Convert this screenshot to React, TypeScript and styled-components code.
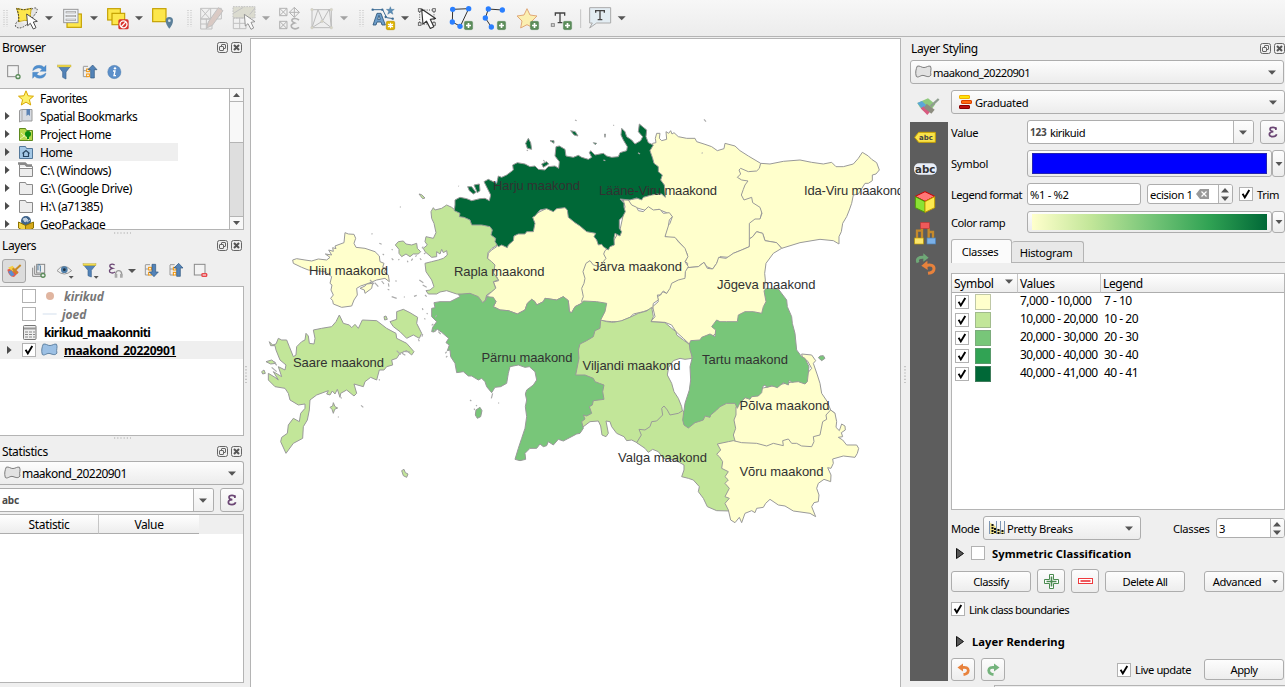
import React from "react";
import styled, { createGlobalStyle, css } from "styled-components";

const Global = createGlobalStyle`
  *, *::before, *::after { box-sizing: border-box; }
  body { margin: 0; background: #efefef; overflow: hidden; }
  svg { display: block; flex: none; }
`;

const ui = css`font-family: "Noto Sans", "Open Sans", sans-serif;`;

const Window = styled.div`
  ${ui}
  width: 1285px; height: 687px; display: flex; flex-direction: column;
  background: #efefef; color: #000; font-size: 12px; letter-spacing: -0.4px; white-space: nowrap; overflow: hidden;
`;
const Toolbar = styled.div`
  height: 37px; flex: none; display: flex;
  background: linear-gradient(#f7f7f7, #ececec); border-bottom: 1px solid #b4b4b4;
`;
const Body = styled.div`flex: 1; min-height: 0; display: flex;`;
const LeftDock = styled.div`width: 244px; display: flex; flex-direction: column; flex: none;`;
const Splitter = styled.div<{ $w: number }>`
  width: ${p => p.$w}px; flex: none; display: flex; align-items: center; justify-content: center; padding: 25px 2px 0 0;
`;
const MapFrame = styled.div`
  width: 651px; margin-top: 1px; flex: none; background: #fff; border: 1px solid #b4b4b4; border-bottom: 0; overflow: hidden;
`;
const RightDock = styled.div`width: 375px; flex: none; display: flex; flex-direction: column; font-size: 11.2px; letter-spacing: -0.5px;`;

const TitleBar = styled.div<{ $h: number; $pl: number; $pr: number; $down?: boolean }>`
  height: ${p => p.$h}px; flex: none; display: flex; align-items: center; gap: 1px;
  padding: ${p => (p.$down ? 1 : 0)}px ${p => p.$pr}px ${p => (p.$down ? 0 : 1)}px ${p => p.$pl}px; font-size: 12px; letter-spacing: -0.4px;
  span { flex: 1; }
`;
const IconRow = styled.div<{ $h: number; $pb: number }>`height: ${p => p.$h}px; padding-bottom: ${p => p.$pb}px; flex: none; display: flex; align-items: center;`;
const Tree = styled.div<{ $h: number }>`
  height: ${p => p.$h}px; flex: none; display: flex; background: #fff; overflow: hidden;
  border: 1px solid #b4b4b4; border-left: 0;
`;
const TreeRows = styled.div`flex: 1; overflow: hidden;`;
const TreeRow = styled.div<{ $sel?: number }>`
  height: 18px; display: flex; align-items: center;
  background: linear-gradient(#efefef, #efefef) no-repeat 0 0 / ${p => p.$sel || 0}px 100%;
`;
const TreeText = styled.span<{ $ml?: number; $b?: boolean; $i?: boolean; $u?: boolean }>`
  margin-left: ${p => p.$ml || 0}px; font-weight: ${p => (p.$b ? 700 : 400)};
  font-style: ${p => (p.$i ? "italic" : "normal")}; color: ${p => (p.$i ? "#777" : "#000")};
  text-decoration: ${p => (p.$u ? "underline" : "none")}; letter-spacing: ${p => (p.$i ? -0.05 : p.$u ? -0.26 : p.$b ? -0.58 : -0.45)}px;
`;
const ExpandSlot = styled.div`width: 18px; flex: none; padding-left: 5px;`;
const ScrollBar = styled.div`
  width: 14px; flex: none; display: flex; flex-direction: column; background: #dedede; border-left: 1px solid #b4b4b4;
`;
const ScrollPart = styled.div<{ $h: number; $push?: boolean }>`
  height: ${p => p.$h}px; display: flex; align-items: center; justify-content: center; background: #f8f8f8;
  border: solid #b4b4b4; border-width: ${p => (p.$push ? "1px 0 0" : "0 0 1px")}; margin-top: ${p => (p.$push ? "auto" : 0)};
`;
const DotsRow = styled.div<{ $h: number }>`height: ${p => p.$h}px; flex: none; display: flex; align-items: center; justify-content: center;`;

const Check = styled.div<{ $ml?: number }>`
  width: 14px; height: 14px; flex: none; margin-left: ${p => p.$ml || 0}px;
  background: #fff; border: 1px solid #b2b2b2; display: flex; align-items: center; justify-content: center;
`;
const Row = styled.div<{ $h: number; $mt?: number }>`
  height: ${p => p.$h}px; margin-top: ${p => p.$mt || 0}px; flex: none; display: flex; align-items: center;
`;
const Combo = styled.div<{ $w: number; $h?: number; $pr?: number; $flatLeft?: boolean }>`
  width: ${p => p.$w}px; height: ${p => p.$h || 24}px; flex: none; display: flex; align-items: center; padding: 0 ${p => p.$pr ?? 7}px 0 4px;
  background: linear-gradient(#fdfdfd, #ececec); border: 1px solid #adadad; border-radius: 3px;
  ${p => p.$flatLeft && css`border-left: 0; border-radius: 0 3px 3px 0;`}
  > svg:last-child { margin-left: auto; }
`;
const Field = styled.div<{ $w: number; $h: number; $flatLeft?: boolean; $ml?: number }>`
  width: ${p => p.$w}px; height: ${p => p.$h}px; flex: none; display: flex; align-items: stretch; margin-left: ${p => p.$ml || 0}px;
  background: #fff; border: 1px solid #adadad; border-radius: 3px; overflow: hidden;
  ${p => p.$flatLeft && css`border-left: 0; border-radius: 0 3px 3px 0;`}
`;
const FieldText = styled.div<{ $ls?: number }>`flex: 1; display: flex; align-items: center; padding-left: 2px; overflow: hidden; letter-spacing: ${p => p.$ls ?? -0.5}px;`;
const Drop = styled.div<{ $w: number }>`
  width: ${p => p.$w}px; flex: none; border-left: 1px solid #b4b4b4; background: linear-gradient(#fdfdfd, #f0f0f0);
  display: flex; align-items: center; justify-content: center; padding-right: 2px;
`;
const Button = styled.div<{ $w: number; $h: number; $ml?: number }>`
  width: ${p => p.$w}px; height: ${p => p.$h}px; margin-left: ${p => p.$ml || 0}px; flex: none;
  display: flex; align-items: center; justify-content: center;
  background: linear-gradient(#fdfdfd, #ededed); border: 1px solid #adadad; border-radius: 3px;
`;
const ToolToggle = styled.div`
  width: 24px; height: 24px; margin-left: 2px; border: 1px solid #a6a6a6; border-radius: 3px; background: #dcdcdc;
`;
const TypeMark = styled.span<{ $w: number }>`width: ${p => p.$w}px; flex: none; font-weight: 700; font-size: 10px; color: #4a4a4a; letter-spacing: -0.2px; margin-top: -1px;`;

const HeadCell = styled.div<{ $w?: number; $center?: boolean; $line?: boolean; $pl?: number }>`
  ${p => (p.$w ? `width: ${p.$w}px; flex: none;` : "flex: 1;")}
  display: flex; align-items: center; justify-content: ${p => (p.$center ? "center" : "flex-start")}; padding-left: ${p => p.$pl || 0}px;
  background: linear-gradient(#fff, #ededed); border-bottom: 1px solid #adadad; border-right: ${p => (p.$line ? 1 : 0)}px solid #c6c6c6;
  font-size: 12px; letter-spacing: -0.35px;
  svg { margin-left: auto; margin-right: 4px; margin-top: -4px; }
`;
const StatTable = styled.div`height: 169px; margin-top: 2px; flex: none; border: 1px solid #b4b4b4; border-left: 0; background: #fff;`;
const StatHead = styled.div`height: 19px; display: flex; background: #efefef;`;

const StyleBody = styled.div`display: flex; flex: none; height: 597px;`;
const SideBar = styled.div`width: 38px; flex: none; padding-top: 5px; display: flex; flex-direction: column;`;
const SideDark = styled.div`flex: 1; background: #5d5d5d; margin-top: 1px;`;
const Form = styled.div`width: 334px; margin-left: 3px; flex: none; display: flex; flex-direction: column;`;
const Label = styled.div<{ $w?: number; $ml?: number; $b?: boolean; $ls?: number }>`
  ${p => p.$w && `width: ${p.$w}px;`} flex: none; margin-left: ${p => p.$ml || 0}px;
  ${p => p.$ls !== undefined && `letter-spacing: ${p.$ls}px;`}
  ${p => p.$b && "font-weight: 700; letter-spacing: 0.08px;"}
`;
const Tabs = styled.div`height: 24px; margin-top: 6px; display: flex; align-items: flex-end; flex: none; border-bottom: 1px solid #b4b4b4; letter-spacing: -0.3px;`;
const Tab = styled.div<{ $w: number; $on?: boolean }>`
  width: ${p => p.$w}px; height: ${p => (p.$on ? 24 : 21)}px; margin-bottom: ${p => (p.$on ? -1 : 0)}px; flex: none;
  display: flex; align-items: center; justify-content: center; padding: 0 3px 0 0;
  background: ${p => (p.$on ? "#fbfbfb" : "#e8e8e8")}; border: 1px solid #b4b4b4; border-bottom: 0; border-left-width: ${p => (p.$on ? 1 : 0)}px;
  border-radius: 3px 3px 0 0;
`;
const ClassTable = styled.div`height: 237px; margin-top: 10px; flex: none; background: #fff; border: 1px solid #b4b4b4;`;
const ClassRow = styled.div`height: 18px; display: flex; align-items: center; font-size: 12px; letter-spacing: -0.5px;`;
const ClassSwatch = styled.div<{ $c: string }>`width: 16px; height: 16px; margin: 0 29px 0 6px; background: ${p => p.$c}; border: 1px solid #7f8f7f80;`;
const ClassText = styled.span<{ $w: number }>`width: ${p => p.$w}px; margin-top: -3px;`;
const HeadRow = styled.div`display: flex; flex: 1; align-self: stretch;`;
const FillBar = styled.div`flex: 1; align-self: stretch; margin: 2px 0;`;
const SymbolFill = styled(FillBar)`background: #0000ff; border: 1px solid #2323b0;`;
const RampFill = styled(FillBar)`background: linear-gradient(90deg, #ffffcc, #c2e699 25%, #78c679 50%, #31a354 75%, #006837);`;
const BottomTabs = styled.div`height: 2px; margin-top: auto; display: flex; div { border-top: 1px solid #b4b4b4; } div:first-child { width: 84px; border-color: transparent; } div:last-child { flex: 1; border-left: 1px solid #b4b4b4; }`;

/* Icons are drawn on a grid of three units to a pixel. */
const Ico = ({ b, children, o = 1 }: { b: [number, number, number, number]; children?: React.ReactNode; o?: number }) => (
  <svg width={b[2] / 3} height={b[3] / 3} viewBox={b.join(" ")} opacity={o}>{children}</svg>
);
const Arrow = ({ w = 8 }: { w?: number }) => (
  <svg width={w} height={5} viewBox="0 0 8 5"><path d="M0 0.4h8L4 4.8z" fill="#555" /></svg>
);
const DropTiny = () => <svg width={7} height={4} viewBox="0 0 7 4" overflow="visible"><path d="M-1.500 0h7L2 4z" fill="#555" /></svg>;
const UpDown = () => (
  <svg width={8} height={13} viewBox="0 0 8 13"><path d="M4 0l4 4.4H0zM4 13l4-4.4H0z" fill="#555" /></svg>
);
const Expander = () => <svg width={5} height={8} viewBox="0 0 5 8"><path d="M0 0l4.600 4L0 8z" fill="#4c4c4c" /></svg>;
const BigExpander = () => <svg width={8} height={11} viewBox="0 0 8 11"><path d="M.5.5l7 5-7 5z" fill="#555" stroke="#111" /></svg>;
const Tick = () => <svg width={10} height={10} viewBox="0 0 10 10"><path d="M1.600 4.800l2.200 3.600L8.300.9" fill="none" stroke="#000" strokeWidth="1.900" /></svg>;
const EpsilonIcon = () => (
  <svg width={10} height={12} viewBox="0 0 30 36"><path d="M24 10Q23 4 15 4 6 4 6 10q0 6 10 7Q4 18 4 25q0 7 11 7 9 0 11-7" fill="none" stroke="#6b4674" strokeWidth="5" /><path d="M21 4h5v8h-5z" fill="#6b4674" /></svg>
);
const DockButtons = () => (
  <svg width={25} height={11} viewBox="0 0 25 11" fill="none" stroke="#666">
    <rect x=".5" y=".5" width="10" height="10" rx="2" /><rect x="4.500" y="2.500" width="4" height="4" rx=".5" /><rect x="2.500" y="4.500" width="4" height="4" rx=".5" fill="#efefef" />
    <rect x="14.500" y=".5" width="10" height="10" rx="2" /><path d="M17 3l5 5M22 3l-5 5" stroke="#555" strokeWidth="2" />
  </svg>
);
const TArrow = ({ b, cx, o }: { b: [number, number, number, number]; cx: number; o?: number }) => (
  <Ico b={b} o={o}><path d={`M${cx - 12} 49h24l-12 12z`} fill="#555" /></Ico>
);
const Handle = ({ b, x }: { b: [number, number, number, number]; x: number }) => (
  <Ico b={b}>{[0, 9].map(dx => <path key={dx} d={`M${x + dx} 30V80`} stroke="#bbb" strokeWidth="3" strokeDasharray="3 4" />)}</Ico>
);
const Cursor = ({ x, y, s = 1 }: { x: number; y: number; s?: number }) => (
  <path transform={`translate(${x} ${y}) scale(${s})`} d="M0 0l3 35 8-7 9 17 8-4-8-17 12-2z" fill="#fff" stroke="#333" strokeWidth="2.600" strokeLinejoin="round" />
);
const Plus = ({ x, y }: { x: number; y: number }) => (
  <g><rect x={x} y={y} width="25" height="25" rx="4" fill="#5b8c5a" stroke="#477a4b" /><path d={`M${x + 12.5} ${y + 5}v15M${x + 5} ${y + 12.5}h15`} stroke="#fff" strokeWidth="5" /></g>
);
const Yellow = ({ x, y, w, h }: { x: number; y: number; w: number; h: number }) => <rect x={x} y={y} width={w} height={h} fill="#fde74c" stroke="#c4a000" strokeWidth="3.500" />;
const Nodes = ({ p }: { p: number[][] }) => <>{p.map(([x, y], i) => <circle key={i} cx={x} cy={y} r="8" fill="#2a7fff" />)}</>;
const Region = ({ fill = "#e2e2e2", stroke = "#777" }) => (
  <svg width={17} height={14} viewBox="0 0 16 13.200"><path d="M2 1.200C4.500.2 6 2.500 8.500 2.400 11 2.300 12.500.4 14.600 1.200 16 4 14 6 15 9.500 13 12.500 10 10 7.500 9.800 5 9.700 3 12.400 1.200 10.800 0 7 1 4 2 1.200z" fill={fill} stroke={stroke} strokeWidth=".9" /></svg>
);
const Folder = ({ children, fill = "#ededed", stroke = "#8a8a8a" }: { children?: React.ReactNode; fill?: string; stroke?: string }) => (
  <svg width={16} height={16} viewBox="0 0 16 16"><path d="M1.500 2.500h6l1 2h6v10h-13z" fill={fill} stroke={stroke} />{children}</svg>
);

const MainToolbar = () => (
  <Toolbar>
    <Handle b={[0, 0, 36, 108]} x={12} />
    <Ico b={[36, 0, 90, 108]}>
      <path d="M88 34L100 24Q116 22 110 36L94 58L104 76M80 74Q60 90 47 80Q44 72 54 62" fill="#e4e4e4" stroke="#444" strokeWidth="3" strokeDasharray="5 4" />
      <path d="M50 25q20 8 44 0-6 18 0 38-20-5-38 2 2-20-6-40z" fill="#fde74c" stroke="#c4a000" strokeWidth="2.500" /><path d="M56 65q2-20-6-40q20 8 44 0" stroke="#333" strokeWidth="3" strokeDasharray="5 4" fill="none" />
      <Cursor x={80} y={42} />
    </Ico>
    <TArrow b={[126, 0, 48, 108]} cx={147} />
    <Ico b={[174, 0, 84, 108]}>
      <Yellow x={201} y={42} w={43} h={40} /><rect x="191" y="28" width="43" height="40" fill="#eef1f5" stroke="#999" strokeWidth="3" />
      <path d="M197 37h31M197 48h31M197 59h31" stroke="#999" strokeWidth="6" /><path d="M199 37h27M199 48h27M199 59h27" stroke="#fff" strokeWidth="2" />
    </Ico>
    <TArrow b={[258, 0, 48, 108]} cx={282} />
    <Ico b={[306, 0, 90, 108]}>
      <Yellow x={323} y={26} w={38} h={34} /><Yellow x={336} y={40} w={38} h={34} />
      <rect x="355" y="58" width="31" height="30" rx="5" fill="#d8332e" /><circle cx="370.500" cy="73" r="10.500" fill="none" stroke="#fff" strokeWidth="4" /><path d="M363 81l15-16" stroke="#fff" strokeWidth="4" />
    </Ico>
    <TArrow b={[396, 0, 42, 108]} cx={417} />
    <Ico b={[438, 0, 102, 108]}>
      <Yellow x={458} y={26} w={40} h={39} />
      <path d="M508 86Q497 72 497 62a11 11 0 0 1 22 0Q519 72 508 86z" fill="#5b7f99" /><circle cx="508" cy="62" r="4" fill="#d7e3ec" />
    </Ico>
    <Handle b={[540, 0, 45, 108]} x={564} />
    <Ico b={[585, 0, 96, 108]} o={0.55}>
      <path d="M602 25h62v32h-62zM602 57h34v30h-34zM632 25v32M602 25l28 32M602 57l28-32M619 57v30M602 72h30" fill="#eee" stroke="#999" strokeWidth="3" />
      <path d="M620 84l5-18 30-43 14 9-32 44z" fill="#c7aaa0" stroke="#999" strokeWidth="3" />
    </Ico>
    <Ico b={[681, 0, 96, 108]} o={0.55}>
      <path d="M699 20h66v34h-66z" fill="#c9c9b4" stroke="#999" strokeWidth="3" strokeDasharray="5 3" /><path d="M700 54h38v32h-38zM719 54v32M700 70h38M700 40l30-18M765 24l-16 20" fill="none" stroke="#999" strokeWidth="3" />
      <Cursor x={733} y={43} />
    </Ico>
    <TArrow b={[777, 0, 42, 108]} cx={798} o={0.5} />
    <Ico b={[819, 0, 93, 108]} o={0.6}>
      <path d="M839 25h22v22h-22zM839 25l22 22M861 25l-22 22M839 64h22v22h-22zM839 64l22 22M861 64l-22 22M883 22l15 15-15 15-15-15zM868 37h30M883 22v30" fill="none" stroke="#888" strokeWidth="3" />
      <path d="M897 60q-10-7-19-3-7 6 6 12-14 4-9 13 10 9 22 0" fill="none" stroke="#888" strokeWidth="5" />
    </Ico>
    <Ico b={[912, 0, 96, 108]} o={0.6}>
      <path d="M936 29h58v54h-58zM936 83l18-54 14 33 20-35 6 56-26-20z" fill="#eee" stroke="#999" strokeWidth="3" />
      {[[936, 29], [994, 29], [936, 83], [994, 83], [966, 64]].map(([x, y]) => <circle key={x + y * 2} cx={x} cy={y} r="4" fill="#c8c4a8" stroke="#aaa" />)}
    </Ico>
    <TArrow b={[-12, 0, 48, 108]} cx={12} o={0.5} />
    <Handle b={[36, 0, 48, 108]} x={60} />
    <Ico b={[84, 0, 90, 108]}>
      <path d="M98 29h30l12 24 20 3" fill="none" stroke="#3b6a93" strokeWidth="3" />
      <path d="M151 20l3 8 9 0-7 6 3 9-8-5-8 5 3-9-7-6 9 0z" fill="#5a8cb5" stroke="#3b6a93" />
      <path d="M99 75l12-35h12l13 35h-10l-3-9h-12l-3 9zM113 58h8l-4-12z" fill="#6c9cc8" stroke="#2d5478" strokeWidth="2.500" fillRule="evenodd" />
      <rect x="139" y="64" width="25" height="25" rx="4" fill="#e0b400" stroke="#b89300" strokeWidth="2" /><path d="M151.500 68v17M144 72.500l15 8M159 72.500l-15 8" stroke="#fff" strokeWidth="4" />
      {[[98, 29], [127, 29], [137, 51], [158, 56]].map(([x, y]) => <circle key={x} cx={x} cy={y} r="3.500" fill="#3b6a93" />)}
    </Ico>
    <TArrow b={[174, 0, 45, 108]} cx={195} />
    <Ico b={[219, 0, 87, 108]}>
      <path d="M239 30h43v42h-43z" fill="none" stroke="#555" strokeWidth="3" strokeDasharray="3 4" />
      {[[239, 30], [282, 30], [239, 72], [282, 72]].map(([x, y]) => <rect key={x + 3 * y} x={x - 4} y={y - 4} width="8" height="8" fill="#eee" stroke="#555" strokeWidth="2.500" />)}
      <Cursor x={245} y={27} s={1.3} />
    </Ico>
    <Ico b={[306, 0, 108, 108]}>
      <path d="M338 28l48-2-25 53-24-13z" fill="#eef3f8" stroke="#333" strokeWidth="3" /><Nodes p={[[338, 28], [386, 26], [337, 66], [360, 79]]} /><Plus x={373} y={64} />
    </Ico>
    <Ico b={[414, 0, 99, 108]}>
      <path d="M487 30l-42-3-9 27 18 27" fill="none" stroke="#333" strokeWidth="3" /><Nodes p={[[487, 30], [445, 27], [436, 54], [454, 81]]} /><Plus x={472} y={64} />
    </Ico>
    <Ico b={[513, 0, 99, 108]}>
      <path d="M561 26l9 19 21 3-15 15 4 21-19-10-19 10 4-21-15-15 21-3z" fill="#fbefb0" stroke="#e0a878" strokeWidth="3" /><Plus x={571} y={64} />
    </Ico>
    <Ico b={[612, 0, 99, 108]}>
      <path d="M646 47v-8h28v8M660 39v29M653 68h14" fill="none" stroke="#444" strokeWidth="4" /><rect x="634" y="71" width="9" height="8" fill="#ddd" stroke="#888" strokeWidth="3" /><Plus x={670} y={64} />
    </Ico>
    <Ico b={[711, 0, 21, 108]}><path d="M722 28v56" stroke="#c4c4c4" strokeWidth="3" /></Ico>
    <Ico b={[732, 0, 93, 108]}>
      <path d="M749 23h63v46h-42l-21 15 8-15h-8z" fill="#e3edf3" stroke="#aaa" strokeWidth="3" /><path d="M767 38v-6h26v6M780 32v27M773 59h14" fill="none" stroke="#444" strokeWidth="4" />
    </Ico>
    <TArrow b={[825, 0, 45, 108]} cx={845} />
  </Toolbar>
);

const TreeLines = ({ x }: { x: number }) => (
  <g><path d={`M${x} 200v30M${x} 199h14M${x} 212h12M${x} 230h12`} stroke="#999" strokeWidth="3" fill="none" /><rect x={x + 10} y={207} width="8" height="8" fill="#fff" stroke="#f39200" strokeWidth="3" /><rect x={x + 10} y={222} width="8" height="8" fill="#fff" stroke="#f39200" strokeWidth="3" /></g>
);

const browserItems: [string, boolean, React.ReactNode][] = [
  ["Favorites", false, <svg width={16} height={16} viewBox="0 0 16 16"><path d="M8 .8l2.100 5 5.400.4-4.100 3.500 1.300 5.300L8 12.100 3.300 15l1.300-5.300L.5 6.200l5.400-.4z" fill="#fdf06a" stroke="#d9a800" /></svg>],
  ["Spatial Bookmarks", true, <svg width={16} height={16} viewBox="0 0 16 16"><path d="M1.500 2.500l2-1h10.500v11.500h-10l-2.500 1z" fill="#d7dbe2" stroke="#999" /><path d="M4 1.500v11" stroke="#aaa" /><path d="M8.500 1h3.500v7l-1.800-1.500L8.500 8z" fill="#5c83b4" /></svg>],
  ["Project Home", true, <Folder fill="#b7d84b" stroke="#5f8a1f"><path d="M2 13l11-8M3 7l8 7" stroke="#e8f4b0" /><circle cx="10" cy="8" r="3" fill="#0a8a12" /><path d="M9 10h2v3h-2z" fill="#0a8a12" /></Folder>],
  ["Home", true, <Folder fill="#a4c8e6" stroke="#54789a"><path d="M4.500 9.500L8 6.500l3.500 3M5.500 9v3.500h5V9" fill="none" stroke="#27445f" strokeWidth="1.200" /></Folder>],
  ["C:\\ (Windows)", true, <Folder><path d="M0 1.500h7l2 2h5" stroke="#888" strokeWidth="2.500" fill="none" /><path d="M2 5.500h12" stroke="#fff" strokeWidth="1.200" /><path d="M2 6.500h12" stroke="#8a8a8a" /></Folder>],
  ["G:\\ (Google Drive)", true, <Folder />],
  ["H:\\ (a71385)", true, <Folder />],
  ["GeoPackage", true, <svg width={16} height={16} viewBox="0 0 16 16"><circle cx="8" cy="5" r="5" fill="#3f648c" /><path d="M5 3l3-1 2 2-3 2zM9 6l3-2" fill="#c3d2e0" stroke="#c3d2e0" /><path d="M.5 6l7 3.500V16l-7-4z" fill="#f4d445" stroke="#8d7200" /><path d="M15.500 6l-8 3.500V16l8-4z" fill="#d6a91c" stroke="#8d7200" /></svg>],
];

const HDots = () => <svg width={17} height={2} viewBox="0 0 17 2"><path d="M0 1h17" stroke="#aaa" strokeWidth="1.200" strokeDasharray="1.200 2" /></svg>;
const VDots = () => <svg width={2} height={17} viewBox="0 0 2 17"><path d="M1 0v17" stroke="#aaa" strokeWidth="1.200" strokeDasharray="1.200 2" /></svg>;

const Left = () => (
  <LeftDock>
    <TitleBar $h={22} $pl={2} $pr={2}><span>Browser</span><DockButtons /></TitleBar>
    <IconRow $h={29} $pb={4}>
      <Ico b={[0, 186, 80, 60]}><rect x="23" y="197" width="32" height="33" fill="#f3f3f3" stroke="#8a8a8a" strokeWidth="3" /><circle cx="54" cy="230" r="8" fill="#5b8c5a" /><path d="M54 226v8M50 230h8" stroke="#fff" strokeWidth="3" /></Ico>
      <Ico b={[80, 186, 75, 60]}><path d="M97 212q2-16 20-16 9 0 14 6l6-6v18h-18l6-6q-5-5-12-4-7 2-16 8zM137 219q-2 16-20 16-9 0-14-6l-6 6v-18h18l-6 6q5 5 12 4 7-2 16-8z" fill="#4f8fcf" stroke="#3c77b3" /></Ico>
      <Ico b={[155, 186, 75, 60]}><path d="M173 198h38l-14 18v21l-10-5v-16z" fill="#5383b8" stroke="#3a6490" strokeWidth="2" /><rect x="172" y="195" width="40" height="6" fill="#f2dc4e" stroke="#a89520" /></Ico>
      <Ico b={[230, 186, 75, 60]}><TreeLines x={249} /><path d="M277 195l13 14h-8v25h-11v-25h-8z" fill="#5383b8" stroke="#2f567f" strokeWidth="2" /></Ico>
      <Ico b={[305, 186, 75, 60]}><circle cx="342" cy="216" r="20" fill="#5c8fc9" stroke="#41719f" /><circle cx="344" cy="205" r="3.500" fill="#fff" /><path d="M338 213h6l-3 14h6" fill="none" stroke="#fff" strokeWidth="4" /></Ico>
    </IconRow>
    <Tree $h={142}>
      <TreeRows>
        {browserItems.map(([name, exp, icon]) => (
          <TreeRow key={name} $sel={name === "Home" ? 178 : 0}>
            <ExpandSlot>{exp && <Expander />}</ExpandSlot>{icon}<TreeText $ml={6}>{name}</TreeText>
          </TreeRow>
        ))}
      </TreeRows>
      <ScrollBar>
        <ScrollPart $h={13}><svg width={7} height={4} viewBox="0 0 7 4"><path d="M3.500 0L7 4H0z" fill="#555" /></svg></ScrollPart>
        <ScrollPart $h={41} />
        <ScrollPart $h={13} $push><svg width={7} height={4} viewBox="0 0 7 4"><path d="M0 0h7L3.500 4z" fill="#555" /></svg></ScrollPart>
      </ScrollBar>
    </Tree>
    <DotsRow $h={5}><HDots /></DotsRow>
    <TitleBar $h={22} $pl={2} $pr={2}><span>Layers</span><DockButtons /></TitleBar>
    <IconRow $h={29} $pb={2}>
      <ToolToggle>
        <Ico b={[9, 83, 66, 66]}><path d="M22 112l18-8 16 16-14 14q-16-2-20-22z" fill="#e85a4a" /><path d="M24 106l14-6 10 14-8 4z" fill="#f4cf45" /><path d="M24 118l10-4 10 14-10 4z" fill="#5b8fd0" /><path d="M40 118l22-20M38 108l14 16" stroke="#c78a25" strokeWidth="6" /></Ico>
      </ToolToggle>
      <Ico b={[78, 86, 77, 60]}><path d="M98 106v26h26M104 100v26h26" fill="none" stroke="#888" strokeWidth="3" /><rect x="110" y="96" width="24" height="26" fill="#eee" stroke="#888" strokeWidth="3" /><path d="M121 118v-18q-5-8-7 0v14" fill="none" stroke="#48789e" strokeWidth="3" /><circle cx="129" cy="129" r="8" fill="#5b8c5a" /><path d="M129 125v8M125 129h8" stroke="#fff" strokeWidth="3" /></Ico>
      <Ico b={[155, 86, 75, 60]}><path d="M170 115q20-26 44 0-22 20-44 0z" fill="#eee" stroke="#999" strokeWidth="3" /><circle cx="192" cy="112" r="10" fill="#4f7ea8" /><circle cx="192" cy="112" r="4" fill="#1c2f40" /><path d="M205 131h15l-7.500 8z" fill="#555" /></Ico>
      <Ico b={[230, 86, 75, 60]}><path d="M250 98h36l-13 16v20l-10-4v-16z" fill="#5383b8" stroke="#3a6490" strokeWidth="2" /><rect x="248" y="94" width="39" height="6" fill="#f2dc4e" stroke="#a89520" /><path d="M280 131h15l-7.500 8z" fill="#555" /></Ico>
      <Ico b={[305, 86, 70, 60]}><path d="M343 98q-8-5-14 0-3 7 8 10-12 3-9 11 8 6 16 0" fill="none" stroke="#6b4674" strokeWidth="4" /><path d="M346 132v-8q1-9 9-9t9 9v8" fill="none" stroke="#999" strokeWidth="4" /><path d="M343 125h8v11h-8zM359 125h8v11h-8z" fill="#aaa" /></Ico>
      <Ico b={[375, 86, 42, 60]}><path d="M384 110h24l-12 12z" fill="#555" /></Ico>
      <Ico b={[417, 188, 73, 60]}><TreeLines x={436} /><path d="M462 235l13-14h-8v-23h-11v23h-8z" fill="#5383b8" stroke="#2f567f" strokeWidth="2" /></Ico>
      <Ico b={[490, 188, 75, 60]}><TreeLines x={511} /><path d="M537 195l13 14h-8v25h-11v-25h-8z" fill="#5383b8" stroke="#2f567f" strokeWidth="2" /></Ico>
      <Ico b={[565, 86, 70, 60]}><rect x="584" y="96" width="32" height="32" fill="#f3f3f3" stroke="#8a8a8a" strokeWidth="3" /><rect x="605" y="122" width="18" height="12" rx="4" fill="#e8484c" /><path d="M609 128h10" stroke="#fff" strokeWidth="3" /></Ico>
    </IconRow>
    <Tree $h={150}>
      <TreeRows>
        <TreeRow><Check $ml={22} /><Ico b={[0, 0, 84, 36]}><circle cx="42" cy="18" r="12" fill="#e0b5a0" /></Ico><TreeText $b $i>kirikud</TreeText></TreeRow>
        <TreeRow><Check $ml={22} /><Ico b={[0, 0, 78, 36]}><path d="M20 18h42" stroke="#dfe8f2" strokeWidth="4" /></Ico><TreeText $b $i>joed</TreeText></TreeRow>
        <TreeRow><Label $w={22} /><svg width={15} height={15} viewBox="0 0 15 15"><rect x="1.500" y=".5" width="12.500" height="14" rx="1" fill="#eee" stroke="#777" /><path d="M2 3.500h12" stroke="#999" strokeWidth="2" /><path d="M3 7h3m1 0h3m1 0h2M3 9.500h3m1 0h3m1 0h2M3 12h3m1 0h3m1 0h2" stroke="#888" /></svg><TreeText $b $ml={7}>kirikud_maakonniti</TreeText></TreeRow>
        <TreeRow $sel={243}><Label $w={7} /><Expander /><Check $ml={10}><Tick /></Check><Label $w={5} /><Region fill="#9cc0e4" stroke="#5c7f9f" /><TreeText $b $u $ml={6}>maakond_20220901</TreeText></TreeRow>
      </TreeRows>
    </Tree>
    <DotsRow $h={4}><HDots /></DotsRow>
    <TitleBar $h={21} $pl={2} $pr={2} $down><span>Statistics</span><DockButtons /></TitleBar>
    <Combo $w={244} $flatLeft><Region /><Label $ml={1} $ls={-0.54}>maakond_20220901</Label><Arrow /></Combo>
    <Row $h={24} $mt={3}>
      <Field $w={214} $h={24} $flatLeft><FieldText><TypeMark $w={20}>abc</TypeMark></FieldText><Drop $w={20}><Arrow /></Drop></Field>
      <Button $w={24} $h={24} $ml={6}><EpsilonIcon /></Button>
    </Row>
    <StatTable><StatHead><HeadCell $w={99} $center $line>Statistic</HeadCell><HeadCell $w={100} $center>Value</HeadCell></StatHead></StatTable>
  </LeftDock>
);

const PALE = "#ffffcc", LIGHT = "#c2e699", MID = "#78c679", DARK = "#006837";
type Shape = [string, string];
/* Each sheet holds county outlines digitised at three units to a pixel from its own origin. */
const sheets: { at: [number, number]; shapes: Shape[] }[] = [
  { at: [430, 120], shapes: [
    [PALE, "200,350 200,380 185,390 175,400 173,415 182,428 192,435 194,450 190,460 200,470 206,482 190,486 197,503 185,515 170,530 190,535 198,545 190,560 210,570 235,572 262,582 285,570 292,550 305,538 315,545 320,555 340,545 345,535 380,540 400,530 415,542 418,575 425,578 435,560 455,550 478,545 560,400 560,300 400,240 300,290"],
  ] },
  { at: [250, 180], shapes: [
    [LIGHT, "550,83 555,90 575,85 590,75 605,82 615,90 650,95 680,120 725,130 732,165 742,195 726,205 714,218 712,235 725,245 735,255 732,270 730,278 745,300 730,305 737,325 725,335 710,345 706,360 698,370 680,355 655,345 620,342 590,332 570,336 560,342 535,342 528,332 540,330 552,320 545,300 528,275 525,250 545,245 565,240 580,235 592,225 590,212 580,218 575,208 570,222 560,215 560,230 545,232 525,215 520,205 532,195 525,185 528,170 550,175 558,158 552,130 545,115 543,95"],
  ] },
  { at: [620, 120], shapes: [
    [PALE, "60,235 80,120 90,80 98,70 108,68 106,55 110,40 120,40 118,55 125,62 140,58 138,35 146,40 152,32 156,42 162,38 175,50 200,55 225,55 230,65 255,73 275,80 292,92 312,86 315,70 345,78 360,92 385,108 422,130 450,170 420,300 390,360 388,380 365,390 340,400 325,412 300,410 290,430 278,447 260,440 252,427 235,440 202,443 203,430 196,425 203,405 190,380 170,358 135,350 138,325 150,310 157,290 140,278 115,268 90,275 45,262 5,240"],
    [PALE, "422,130 450,132 490,124 540,120 575,127 610,132 635,127 648,140 670,140 700,132 715,115 727,97 745,108 755,118 770,128 778,150 768,162 757,165 757,182 745,190 735,190 715,222 700,225 695,250 688,270 680,290 668,310 664,335 657,350 657,372 640,362 600,358 540,368 485,385 470,368 435,362 428,340 410,335 398,350 388,357 388,310 405,297 420,297 426,280 420,262 398,248 395,232 372,240 364,225 370,208 375,195 384,183 365,180 352,172 362,162 357,150 362,145 385,155 410,153 418,145"],
    [PALE, "202,443 235,440 252,427 262,445 278,447 290,430 296,412 318,415 340,400 365,390 388,380 388,357 398,350 410,335 428,340 435,362 470,368 485,385 460,400 438,430 434,460 436,480 434,505 480,540 420,590 300,630 240,680 208,672 190,655 168,635 155,615 135,607 92,605 105,590 98,560 115,545 112,530 122,525 128,515 140,520 150,490 195,470 195,450"],
  ] },
  { at: [430, 120], shapes: [
    [PALE, "525,392 540,380 570,330 585,260 580,240 595,240 605,255 620,262 625,272 640,275 655,260 670,270 690,268 700,280 718,278 727,290 718,300 715,318 705,350 735,352 745,365 765,385 774,410 765,425 775,440 766,455 765,475 745,480 725,490 720,505 710,520 700,513 690,525 682,525 685,540 670,550 668,565 640,575 610,582 600,592 570,605 545,605 512,602 470,590 455,543 460,530 455,505 462,490 465,475 459,455 468,430 480,422 490,435 510,440 520,425 528,415 521,402"],
    [LIGHT, "440,600 512,600 530,605 550,607 575,602 600,592 625,580 650,573 665,562 670,590 663,605 705,608 725,625 738,635 740,645 760,660 778,673 786,690 786,715 765,718 750,715 730,722 716,742 712,765 725,790 732,815 745,835 755,860 757,872 740,910 670,950 625,970 605,960 590,962 582,950 560,940 545,920 540,905 528,903 535,940 528,950 516,945 512,918 505,903 480,905 455,924 430,900"],
  ] },
  { at: [620, 120], shapes: [
    [LIGHT, "50,968 64,945 57,928 75,930 90,920 95,905 110,903 128,885 125,865 132,858 142,870 150,885 175,880 188,872 210,890 320,840 350,850 370,900 350,970 330,1173 290,1172 262,1160 250,1135 235,1115 238,1100 220,1080 205,1075 185,1070 192,1050 192,1035 165,1020 130,1015 115,995 98,988 85,997 75,985"],
    [PALE, "348,860 400,810 545,780 575,745 562,722 548,715 545,702 575,705 587,722 580,730 592,765 600,790 605,820 622,845 632,870 645,880 600,1000 350,980 345,962 340,945 347,925 342,900 348,885"],
    [PALE, "292,972 325,965 340,962 365,968 410,970 440,978 460,970 490,977 488,962 505,957 515,970 530,970 545,978 575,980 582,965 580,950 600,945 608,905 620,898 618,885 632,870 645,880 650,905 648,922 658,932 665,912 675,918 676,930 664,938 668,950 655,952 668,960 680,975 710,975 716,985 712,1000 705,1012 670,1008 638,1017 640,1030 633,1045 623,1043 633,1065 632,1085 612,1078 595,1090 590,1105 597,1125 595,1145 582,1148 575,1160 587,1190 570,1180 520,1173 495,1158 475,1155 450,1138 437,1150 430,1162 410,1165 405,1178 395,1172 375,1180 365,1208 358,1192 345,1208 332,1200 325,1170 315,1150 328,1135 315,1130 328,1105 315,1090 325,1080 315,1070 325,1055 305,1045 308,1025 298,1010 290,1003 302,990"],
    [MID, "432,512 440,505 475,507 500,540 502,560 515,590 517,610 525,640 530,690 545,710 555,715 567,740 562,785 555,792 535,785 515,787 508,780 505,795 490,788 472,803 455,797 440,802 435,795 428,800 425,818 415,828 395,830 390,838 375,833 360,848 352,865 345,850 320,850 300,860 290,870 272,885 270,892 255,888 250,900 235,905 225,908 205,924 192,915 188,900 195,850 208,810 212,780 210,740 217,712 210,690 208,672 212,662 240,660 245,652 270,642 285,650 287,630 275,620 290,600 300,605 320,605 352,605 355,585 375,575 400,575 425,580 430,560 438,545"],
    [MID, "595,713 600,708 610,707 615,715 605,722"],
  ] },
  { at: [430, 120], shapes: [
    [MID, "5,565 15,563 12,548 30,545 60,545 90,530 85,523 120,520 145,530 158,548 168,540 170,530 190,532 198,545 190,560 210,570 235,572 262,582 285,570 292,550 305,538 315,545 320,555 340,545 345,535 380,540 400,530 415,542 418,575 425,578 435,560 455,550 460,543 500,545 530,550 525,575 512,600 510,625 495,632 490,650 470,662 450,672 445,690 447,715 437,765 465,765 490,775 495,785 508,790 522,795 518,815 522,838 490,842 487,855 478,860 485,880 470,888 460,885 465,897 455,905 460,925 450,940 440,942 400,963 385,958 370,975 355,965 350,977 340,980 330,972 320,985 300,985 285,1000 287,1018 270,1022 255,1018 265,985 275,955 285,925 290,890 286,860 290,840 286,822 290,810 310,795 320,780 315,755 298,740 285,742 265,735 240,740 235,760 230,790 212,800 195,802 185,818 170,800 165,785 155,775 145,780 125,768 115,768 100,755 80,758 75,730 62,710 60,690 52,692 58,675 48,668 56,655 35,637 22,628 12,636 5,635 8,622 20,605 5,590"],
    [MID, "138,870 150,862 156,872 152,890 142,895 136,885"],
    [DARK, "75,240 90,232 110,236 125,242 150,236 165,235 178,242 182,225 172,205 162,185 175,178 200,190 205,168 215,172 230,165 250,150 248,135 262,128 285,132 300,140 315,138 325,148 345,150 355,140 375,138 386,145 388,125 375,108 378,80 388,78 405,88 408,108 430,112 445,106 455,112 475,118 485,112 478,98 482,92 495,105 520,100 530,108 545,112 565,110 570,98 590,92 592,80 580,60 573,45 575,25 585,35 590,50 605,60 615,72 632,62 638,50 625,35 628,12 640,22 650,30 648,50 655,68 670,75 660,92 668,115 672,130 685,140 685,155 697,165 692,180 703,195 706,232 695,222 685,222 665,225 640,232 635,240 620,234 600,240 570,237 582,250 582,262 586,275 578,290 568,300 568,325 575,335 570,348 555,340 552,355 553,375 540,380 535,390 520,380 515,373 505,375 500,360 492,350 497,340 470,335 450,318 435,308 415,292 412,270 405,263 380,266 370,275 350,266 330,270 315,288 308,292 315,310 310,335 290,335 285,342 265,342 252,348 250,362 235,375 232,383 215,375 205,380 195,365 197,355 183,345 187,330 180,320 155,315 125,315 120,300 102,292 88,290 90,280 73,272 75,255"],
    [DARK, "287,70 295,55 302,68 305,88 292,85"], [DARK, "113,200 125,200 138,217 130,222 118,212"], [DARK, "132,195 148,192 150,212 142,218"],
    [DARK, "335,132 350,125 356,132 340,142"], [DARK, "422,32 436,35 444,48 432,45"], [DARK, "360,62 372,62 372,70"], [DARK, "490,68 500,70 496,74"], [DARK, "524,42 526,42 525,52"],
  ] },
  { at: [250, 180], shapes: [
    [PALE, "128,240 140,236 165,240 185,243 205,237 230,240 240,232 226,222 245,225 236,210 250,214 248,203 258,206 255,198 282,188 285,158 295,162 312,163 317,175 312,190 318,202 345,205 375,215 388,228 390,245 402,250 398,262 410,265 402,275 415,285 418,305 405,295 380,300 368,305 350,312 332,318 320,325 322,345 312,360 305,378 275,382 250,372 248,362 242,355 250,345 243,330 246,315 240,310 245,290 225,275 175,270 155,262 130,250"],
    [PALE, "330,325 345,318 350,312 368,310 365,325 345,340 343,330"],
    [LIGHT, "436,195 445,185 460,183 468,192 485,195 500,190 502,205 512,215 505,222 490,222 480,230 468,222 455,230 447,220 447,208"],
    [LIGHT, "420,425 440,418 440,395 460,388 480,398 503,412 500,430 515,460 508,475 490,465 470,475 450,455 430,440"],
    [LIGHT, "402,410 408,408 412,418 404,420"],
    [LIGHT, "58,485 68,495 78,492 85,475 95,480 110,480 118,500 130,530 138,525 140,500 155,485 165,480 168,460 175,468 178,490 192,492 195,475 190,450 215,445 245,440 258,425 268,405 280,430 298,435 305,443 315,433 325,445 337,420 380,422 410,445 438,460 440,475 470,490 492,515 485,525 470,512 450,520 440,535 425,540 428,555 410,560 402,570 388,570 380,600 362,592 345,605 340,620 312,612 320,640 312,648 290,630 272,640 270,652 262,628 255,642 247,633 240,645 230,642 235,632 200,645 180,660 178,690 172,720 160,740 158,775 130,790 108,820 92,785 95,772 112,760 115,735 130,715 148,725 152,700 165,685 165,672 145,675 120,660 115,640 105,625 75,620 55,600 55,580 75,592 85,600 70,575 95,590 85,560 105,570 108,555 90,540 78,510 75,497 62,497"],
    [LIGHT, "240,682 248,678 250,668 255,680 263,684 254,688 250,700 246,688"],
    [LIGHT, "455,872 462,868 466,878 474,882 470,892 460,887"], [LIGHT, "507,42 515,44 525,54 518,56"],
    [LIGHT, "48,545 65,540 78,550 62,552"], [LIGHT, "35,575 42,570 46,580 38,582"],
  ] },
];
const specks = "388,190 395,193|398,222 402,225|425,235 430,240|365,160 367,163|425,208 428,210|445,240 448,238|472,242 474,247|484,242 488,236|510,235 514,240|496,230 500,226|415,310 417,320|395,303 402,312|436,302 440,304|413,328 418,330|425,350 440,355|462,350 464,352|492,349 500,346|508,300 520,308|518,315 530,322|525,345 530,350|517,385 519,390|523,415 526,418|530,400 533,402|505,478 508,484|518,462 516,470|333,676 340,682|264,710 266,712|387,598 389,601|272,652 275,655|395,545 398,552|440,512 452,524|456,520 466,526|460,514 480,516|560,405 556,412|550,432 545,436|552,448 556,455|565,455 572,462|590,515 586,520|592,528 588,532|728,640 724,655|745,668 747,670|660,660 664,663|672,686 675,690|678,676 681,678|520,200 516,205|527,218 522,222|374,308 385,320|360,300 372,312|65,562 80,575|72,545 80,556|450,80 452,82|625,18 627,19|880,-60 884,-55|830,-90 834,-88|975,-180 980,-178|1090,-165 1092,-163|1355,-82 1358,-80|1362,-182 1368,-175|1164,-82 1170,-78|1060,-60 1066,-58";

const labels: [string, number, number, number][] = [
  ["Hiiu maakond", 309, 275, 79], ["Saare maakond", 293, 367, 91], ["Rapla maakond", 454, 276, 90.5], ["Pärnu maakond", 481.5, 362, 91],
  ["Harju maakond", 493, 190, 87], ["Lääne-Viru maakond", 599, 195, 118], ["Ida-Viru maakond", 804, 195, 100], ["Järva maakond", 593, 271, 89],
  ["Jõgeva maakond", 717, 289, 98.500], ["Viljandi maakond", 582.5, 370, 98], ["Tartu maakond", 702, 364, 86], ["Põlva maakond", 739.5, 410, 90],
  ["Võru maakond", 739.5, 476, 84], ["Valga maakond", 618, 462, 89],
];
const MapView = () => (
  <MapFrame>
    <svg width={649} height={648} viewBox="251 39 649 648">
      {sheets.map((s, i) => (
        <g key={i} transform={`translate(${s.at[0]} ${s.at[1]}) scale(.33333)`} stroke="#999" strokeWidth="3" strokeLinejoin="round">
          {s.shapes.map(([f, p], j) => <polygon key={j} fill={f} points={p} />)}
        </g>
      ))}
      <g transform="translate(250 180) scale(.33333)" fill="none" stroke="#aaa" strokeWidth="3.500">
        {specks.split("|").map((p, i) => <polyline key={i} points={p} />)}
      </g>
      <g fontFamily="'Liberation Sans', Arial, sans-serif" fontSize="13" fill="#323232" letterSpacing="0">
        {labels.map(([t, x, y, w]) => <text key={t} x={x} y={y} textLength={w}>{t}</text>)}
      </g>
    </svg>
  </MapFrame>
);

const classes: [string, string, string][] = [
  ["#ffffcc", "7,000 - 10,000", "7 - 10"], ["#c2e699", "10,000 - 20,000", "10 - 20"], ["#78c679", "20,000 - 30,000", "20 - 30"],
  ["#31a354", "30,000 - 40,000", "30 - 40"], ["#006837", "40,000 - 41,000", "40 - 41"],
];

const SideIcons = () => (
  <svg width={38} height={160} viewBox="0 0 114 480">
    <path d="M26 31L14 46l12 15h50V31z" fill="#f9e34a" stroke="#caa300" strokeWidth="3" strokeLinejoin="round" />
    <text x="27" y="53" fontFamily="DejaVu Sans" fontWeight="700" fontSize="21" fill="#444" textLength="42" letterSpacing="0">abc</text>
    <rect x="12" y="124" width="68" height="34" rx="15" fill="#e9eef8" /><text x="15" y="152" fontFamily="DejaVu Sans" fontWeight="700" fontSize="32" fill="#333" textLength="61" lengthAdjust="spacingAndGlyphs" letterSpacing="0">abc</text>
    <path d="M45 209l29 14-29 15-29-15z" fill="#f77" stroke="#c00" strokeWidth="3" /><path d="M16 224l29 15v32l-29-14z" fill="#8be234" stroke="#4e9a06" strokeWidth="3" /><path d="M74 224l-29 15v32l29-14z" fill="#fce94f" stroke="#c4a000" strokeWidth="3" />
    <path d="M21 348V326h15V318M36 326v22M56 318v30M56 330h13v18" fill="none" stroke="#c58a2c" strokeWidth="7" /><rect x="32" y="302" width="26" height="17" fill="#ee5a5a" stroke="#c33" strokeWidth="2" /><rect x="14" y="348" width="26" height="18" fill="#fce66a" stroke="#c4a000" strokeWidth="2" /><rect x="51" y="348" width="26" height="18" fill="#7ab0e8" stroke="#4a7fb5" strokeWidth="2" />
    <path d="M24 422q-8-18 20-16" fill="none" stroke="#6fa877" strokeWidth="9" /><path d="M40 394l16 13-16 12z" fill="#6fa877" />
    <path d="M46 431q26-6 26 9 0 12-18 14" fill="none" stroke="#e8823c" strokeWidth="9" /><path d="M52 416l-18 15 19 13z" fill="#e8823c" />
  </svg>
);

const Right = () => (
  <RightDock>
    <TitleBar $h={23} $pl={1} $pr={0}><span>Layer Styling</span><DockButtons /></TitleBar>
    <Combo $w={374}><Region /><Label $ml={1} $ls={-0.54}>maakond_20220901</Label><Arrow /></Combo>
    <StyleBody>
      <SideBar>
        <Ico b={[0, 0, 114, 96]}>
          <path d="M22 42l32-14 22 18-20 26q-20-2-34-30z" fill="#8fc97c" /><path d="M22 42l14-6 16 16-14 10z" fill="#5aa7d8" /><path d="M32 58l10-6 18 16-8 10z" fill="#d85a7f" />
          <path d="M62 52l24-22" stroke="#8f9d8f" strokeWidth="7" /><path d="M50 44l24 18-10 12-22-18z" fill="#8d8d80" />
        </Ico>
        <SideDark><SideIcons /></SideDark>
      </SideBar>
      <Form>
        <Row $h={24} $mt={6}><Combo $w={334}>
          <svg width={19} height={16} viewBox="0 0 19 16"><rect x="3.500" y="1.500" width="10" height="3" rx=".5" fill="#fbe50c" stroke="#f4b000" /><rect x="5.500" y="6.500" width="10" height="3" rx=".5" fill="#ff6a10" stroke="#d84000" /><rect x="3.500" y="11.500" width="10" height="3" rx=".5" fill="#b81010" stroke="#800" /></svg>
          <Label $ls={-0.3}>Graduated</Label><Arrow /></Combo></Row>
        <Row $h={24} $mt={6}><Label $w={76} $ls={-0.3}>Value</Label>
          <Field $w={227} $h={24}><FieldText><TypeMark $w={20}>123</TypeMark>kirikuid</FieldText><Drop $w={20}><Arrow /></Drop></Field>
          <Button $w={25} $h={24} $ml={6}><EpsilonIcon /></Button></Row>
        <Row $h={27} $mt={6}><Label $w={76} $ls={-0.3}>Symbol</Label>
          <Combo $w={245} $h={27} $pr={4}><SymbolFill /></Combo><Combo $w={13} $h={27} $pr={2}><DropTiny /></Combo></Row>
        <Row $h={22} $mt={6}><Label $w={76} $ls={-0.55}>Legend format</Label>
          <Field $w={114} $h={22}><FieldText $ls={-0.3}>%1 - %2</FieldText></Field>
          <Field $w={86} $h={20} $ml={6}><FieldText $ls={-0.35}>ecision 1<Label $w={3} /><svg width={13} height={10} viewBox="0 0 13 10"><path d="M0 5l4-5h9v10H4z" fill="#999" /><path d="M5.500 2.500l5 5M10.500 2.500l-5 5" stroke="#fff" strokeWidth="1.200" /></svg></FieldText><Drop $w={14}><UpDown /></Drop></Field>
          <Check $ml={6}><Tick /></Check><Label $ml={4} $ls={-0.4}>Trim</Label></Row>
        <Row $h={22} $mt={6}><Label $w={76}>Color ramp</Label>
          <Combo $w={245} $h={22} $pr={4}><RampFill /></Combo><Combo $w={13} $h={22} $pr={2}><DropTiny /></Combo></Row>
        <Tabs><Tab $w={61} $on>Classes</Tab><Tab $w={72}>Histogram</Tab></Tabs>
        <ClassTable>
          <Row $h={19}>
            <HeadRow><HeadCell $w={66} $line $pl={2}>Symbol<Arrow /></HeadCell><HeadCell $w={83} $line $pl={2}>Values</HeadCell><HeadCell $pl={2}>Legend</HeadCell></HeadRow>
          </Row>
          {classes.map(([c, v, l]) => (
            <ClassRow key={v}><Check $ml={3}><Tick /></Check><ClassSwatch $c={c} /><ClassText $w={84}>{v}</ClassText><ClassText $w={60}>{l}</ClassText></ClassRow>
          ))}
        </ClassTable>
        <Row $h={24} $mt={6}><Label $w={32} $ls={-0.4}>Mode</Label>
          <Combo $w={158}><svg width={19} height={14} viewBox="0 0 19 14"><path d="M1 1l5 3 5 5 5 1v3H1z" fill="#efe08a" /><path d="M1.500 0v13M8.500 0v13M12.500 0v13M16.500 0v13" stroke="#7d96b4" /><path d="M4.500 3v10M7 7v6M10.500 8v5M14.500 9v4" stroke="#111" strokeWidth="2" strokeDasharray="2 1" /></svg><Label $ls={-0.3}>Pretty Breaks</Label><Arrow /></Combo>
          <Label $ml={32} $w={43} $ls={-0.3}>Classes</Label>
          <Field $w={69} $h={20}><FieldText>3</FieldText><Drop $w={14}><UpDown /></Drop></Field></Row>
        <Row $h={14} $mt={6}><Label $w={5} /><BigExpander /><Check $ml={7} /><Label $ml={7} $b>Symmetric Classification</Label></Row>
        <Row $h={24} $mt={9}><Button $w={80} $h={21}>Classify</Button>
          <Button $w={28} $h={24} $ml={6}><svg width={15} height={15} viewBox="0 0 15 15"><path d="M5.500.5h4v5h5v4h-5v5h-4v-5h-5v-4h5z" fill="#fff" stroke="#4a8a50" /><path d="M7.500 2.500v10M2.500 7.500h10" stroke="#4a8a50" strokeWidth="1.600" /></svg></Button>
          <Button $w={28} $h={24} $ml={6}><svg width={15} height={6} viewBox="0 0 15 6"><rect x=".5" y=".5" width="14" height="5" fill="#fff" stroke="#ef3a3e" /><path d="M2.500 3h10" stroke="#ef5a5e" strokeWidth="2" /></svg></Button>
          <Button $w={80} $h={21} $ml={6}>Delete All</Button>
          <Button $w={80} $h={21} $ml={19}><Label $ml={3} $ls={-0.35}>Advanced</Label><Label $w={11} /><Arrow w={6} /></Button></Row>
        <Row $h={14} $mt={9}><Check><Tick /></Check><Label $ml={4} $ls={-0.6}>Link class boundaries</Label></Row>
        <Row $h={16} $mt={17}><Label $w={5} /><BigExpander /><Label $ml={8} $b>Layer Rendering</Label></Row>
        <Row $h={23} $mt={9}>
          <Button $w={24} $h={23}><svg width={13} height={13} viewBox="0 0 13 13"><path d="M5 4.500q6-1 6.300 3Q11 11 6.500 11.500" fill="none" stroke="#e8823c" strokeWidth="2.800" /><path d="M6 .5v8L.5 4.500z" fill="#e8823c" /></svg></Button>
          <Button $w={24} $h={23} $ml={6}><svg width={13} height={13} viewBox="0 0 13 13"><path d="M8 4.500q-6-1-6.300 3Q2 11 6.500 11.500" fill="none" stroke="#74b37c" strokeWidth="2.800" /><path d="M7 .5v8l5.500-4z" fill="#74b37c" /></svg></Button>
          <Check $ml={112}><Tick /></Check><Label $ml={4} $w={69} $ls={-0.45}>Live update</Label><Button $w={80} $h={21}>Apply</Button></Row>
      </Form>
    </StyleBody>
    <BottomTabs><div /><div /></BottomTabs>
  </RightDock>
);

export default function App() {
  return (
    <Window>
      <Global />
      <MainToolbar />
      <Body>
        <Left />
        <Splitter $w={6}><VDots /></Splitter>
        <MapView />
        <Splitter $w={9}><VDots /></Splitter>
        <Right />
      </Body>
    </Window>
  );
}
